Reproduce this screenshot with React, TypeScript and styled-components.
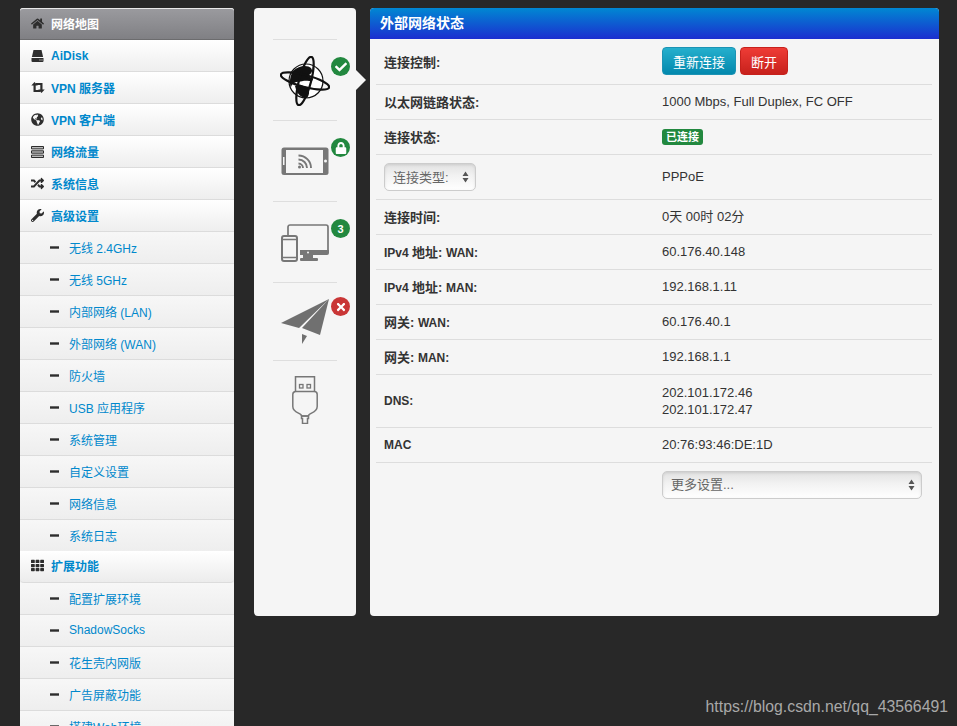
import React from 'react';
import styled, { createGlobalStyle } from 'styled-components';
import { FaHome, FaGlobeAmericas, FaRandom, FaWrench, FaTh, FaCheck, FaLock, FaTimes } from 'react-icons/fa';

const GlobalStyle = createGlobalStyle`
  html, body {
    margin: 0;
    height: 726px;
    overflow: hidden;
    background: #282828;
    font-family: "Liberation Sans", "Noto Sans CJK SC", sans-serif;
  }
  * { box-sizing: border-box; }
`;

const Page = styled.div`
  display: flex;
  align-items: flex-start;
  height: 726px;
  overflow: hidden;
  padding: 8px 0 0 20px;
  position: relative;
`;

const Sidebar = styled.nav`
  width: 214px;
  flex: none;
  margin-right: 20px;
  display: flex;
  flex-direction: column;
  background: #f2f2f2;
  border-radius: 3px 3px 0 0;
`;

const NavRow = styled.div<{ $active?: boolean; $sub?: boolean; $group?: boolean; $lift?: boolean }>`
  height: 32px;
  flex: none;
  display: flex;
  align-items: center;
  margin-top: ${(p) => (p.$group ? -1 : 0)}px;
  padding-left: ${(p) => (p.$sub ? 30 : 10)}px;
  padding-bottom: ${(p) => (p.$group ? 3 : p.$active || p.$lift ? 1 : 0)}px;
  gap: ${(p) => (p.$sub ? 10 : 6)}px;
  font-size: 12px;
  font-weight: ${(p) => (p.$sub ? 400 : 700)};
  color: ${(p) => (p.$active ? '#fff' : '#0088cc')};
  background: ${(p) =>
    p.$active
      ? 'linear-gradient(#9a9a9e, #808084)'
      : p.$group
        ? 'linear-gradient(#ffffff, #ececec)'
        : p.$sub
          ? 'linear-gradient(#f7f7f7, #eeeeee)'
          : 'linear-gradient(#ffffff, #eeeeee)'};
  border-bottom: 1px solid ${(p) => (p.$active ? '#6c6c6e' : '#dcdcdc')};
  border-radius: ${(p) => (p.$active ? '3px 3px 0 0' : p.$group ? '0 0 4px 4px' : '0')};
  border-top: ${(p) => (p.$active ? '1px solid #e8e8e8' : 'none')};
`;

const NavIcon = styled.span<{ $small?: boolean }>`
  width: ${(p) => (p.$small ? 9 : 15)}px;
  height: 14px;
  flex: none;
  display: flex;
  align-items: center;
  justify-content: center;
  color: #2d2d2d;
  font-size: 13px;
`;

const Rail = styled.div`
  width: 102px;
  height: 608px;
  flex: none;
  margin-right: 14px;
  background: #f5f5f5;
  border-radius: 4px;
  padding: 31px 19px 0;
  display: flex;
  flex-direction: column;
  position: relative;
`;

const RailCell = styled.div<{ $h: number }>`
  height: ${(p) => p.$h}px;
  flex: none;
  border-top: 1px solid #dedede;
  display: flex;
  justify-content: center;
  position: relative;
`;

const DeviceIcon = styled.svg<{ $top: number }>`
  margin-top: ${(p) => p.$top}px;
  display: block;
`;

const Badge = styled.span<{ $color: string; $top: number }>`
  position: absolute;
  right: -13px;
  top: ${(p) => p.$top}px;
  width: 19px;
  height: 19px;
  border-radius: 50%;
  background: ${(p) => p.$color};
  color: #fff;
  font-size: 11px;
  font-weight: 700;
  display: flex;
  align-items: center;
  justify-content: center;

  svg {
    width: 12px;
    height: 12px;
  }
`;

const Pointer = styled.span`
  position: absolute;
  left: 102px;
  top: 62px;
  width: 0;
  height: 0;
  border-top: 10px solid transparent;
  border-bottom: 10px solid transparent;
  border-left: 10px solid #f5f5f5;
`;

const Panel = styled.section`
  width: 569px;
  height: 608px;
  flex: none;
  background: #f5f5f5;
  border-radius: 4px;
  overflow: hidden;
`;

const PanelHead = styled.h2`
  margin: 0;
  height: 31px;
  padding: 0 0 3px 10px;
  display: flex;
  align-items: center;
  color: #fff;
  font-size: 14px;
  font-weight: 700;
  background: linear-gradient(#0088d2, #1c2ed0);
`;

const StatusTable = styled.div`
  margin: 0 7px 0 6px;
`;

const StatusRow = styled.div<{ $h: number; $last?: boolean }>`
  height: ${(p) => p.$h}px;
  display: grid;
  grid-template-columns: 278px 1fr;
  align-items: center;
  padding: 0 0 1px 8px;
  font-size: 13px;
  color: #333;
  border-bottom: ${(p) => (p.$last ? 'none' : '1px solid #dddddd')};
`;

const RowLabel = styled.div`
  font-weight: 700;
`;

const Latin = styled.span`
  font-size: 12px;
`;

const RowValue = styled.div`
  line-height: 17px;
`;

const ButtonGroup = styled.div`
  display: flex;
  gap: 4px;
`;

const Btn = styled.button<{ $from: string; $to: string; $line: string }>`
  height: 28px;
  padding: 0 10px;
  border: 1px solid ${(p) => p.$line};
  border-radius: 4px;
  font: 13px "Liberation Sans", "Noto Sans CJK SC", sans-serif;
  color: #fff;
  background: linear-gradient(${(p) => p.$from}, ${(p) => p.$to});
`;

const StatusTag = styled.span`
  display: inline-block;
  height: 16px;
  line-height: 16px;
  padding: 0 4px;
  border-radius: 3px;
  background: #22883f;
  color: #fff;
  font-size: 11px;
  font-weight: 700;
`;

const FakeSelect = styled.div<{ $w: number }>`
  width: ${(p) => p.$w}px;
  height: 28px;
  border: 1px solid #cccccc;
  border-radius: 5px;
  background: linear-gradient(#e2e2e2, #f2f2f2 45%, #ffffff);
  box-shadow: inset 0 1px 3px rgba(0, 0, 0, 0.1);
  color: #666;
  font-size: 13px;
  font-weight: 400;
  display: flex;
  align-items: center;
  justify-content: space-between;
  padding: 0 6px 0 8px;
`;

const Arrows = styled.svg`
  display: block;
  flex: none;
`;

const Watermark = styled.div`
  position: absolute;
  right: 9px;
  top: 697px;
  font-size: 15.8px;
  line-height: 20px;
  color: #a8a8a8;
`;

const SelectArrows = () => (
  <Arrows width="7" height="12" viewBox="0 0 7 12">
    <path d="M3.5 0.5 L6.5 5 H0.5 Z M0.5 7 H6.5 L3.5 11.5 Z" fill="#555" />
  </Arrows>
);

const DriveIcon = () => (
  <svg width="13" height="12" viewBox="0 0 13 12">
    <path d="M2.5 0h8l1.6 7H0.9z" fill="#2d2d2d" />
    <path d="M0.5 8h12v3a1 1 0 0 1-1 1h-10a1 1 0 0 1-1-1z" fill="#2d2d2d" />
    <path d="M8.5 9.5h1v1h-1zM10.5 9.5h1v1h-1z" fill="#eee" />
  </svg>
);

const RetweetIcon = () => (
  <svg width="14" height="11" viewBox="0 0 14 11">
    <path
      d="M3.5 0L6.8 3.6H4.7V8H9v2H2.5V3.6H0.3zM10.5 11L7.2 7.4h2.1V3H5V1h6.5v6.4h2.2z"
      fill="#2d2d2d"
    />
  </svg>
);

const TasksIcon = () => (
  <svg width="13" height="12" viewBox="0 0 13 12">
    <path d="M0.5 0.5h12v2.4h-12z M0.5 4.8h12v2.4h-12z M0.5 9.1h12v2.4h-12z" fill="#bbb" stroke="#2d2d2d" />
  </svg>
);

const MinusIcon = () => (
  <svg width="9" height="3" viewBox="0 0 9 3">
    <rect width="9" height="2.4" y="0.3" fill="#2d2d2d" />
  </svg>
);

const mainNav = [
  { label: 'AiDisk', icon: <DriveIcon /> },
  { label: 'VPN 服务器', icon: <RetweetIcon /> },
  { label: 'VPN 客户端', icon: <FaGlobeAmericas /> },
  { label: '网络流量', icon: <TasksIcon /> },
  { label: '系统信息', icon: <FaRandom /> },
  { label: '高级设置', icon: <FaWrench /> },
];

const advanced = [
  '无线 2.4GHz',
  '无线 5GHz',
  '内部网络 (LAN)',
  '外部网络 (WAN)',
  '防火墙',
  'USB 应用程序',
  '系统管理',
  '自定义设置',
  '网络信息',
  '系统日志',
];

const extras = ['配置扩展环境', 'ShadowSocks', '花生壳内网版', '广告屏蔽功能', '搭建Web环境'];

const SubItem: React.FC<{ label: string; lift?: boolean }> = ({ label, lift }) => (
  <NavRow $sub $lift={lift}>
    <NavIcon $small>
      <MinusIcon />
    </NavIcon>
    {label}
  </NavRow>
);

const App: React.FC = () => (
  <Page>
    <GlobalStyle />
    <Sidebar>
      <NavRow $active>
        <NavIcon>
          <FaHome />
        </NavIcon>
        网络地图
      </NavRow>
      {mainNav.map((item) => (
        <NavRow key={item.label}>
          <NavIcon>{item.icon}</NavIcon>
          {item.label}
        </NavRow>
      ))}
      {advanced.map((label) => (
        <SubItem key={label} label={label} />
      ))}
      <NavRow $group>
        <NavIcon>
          <FaTh />
        </NavIcon>
        扩展功能
      </NavRow>
      {extras.map((label) => (
        <SubItem key={label} label={label} lift />
      ))}
    </Sidebar>

    <Rail>
      <Pointer />
      <RailCell $h={81}>
        <DeviceIcon $top={16} width="50" height="50" viewBox="0 0 50 50">
          <circle cx="26" cy="25" r="17" fill="#fff" stroke="#111" strokeWidth="1.2" />
          <path d="M13 15c6-6 15-6 18-3 3 4-1 6-3 8 2 2 5 1 5 4-3 2-7 0-10 1-3 1-6 0-9 2-2 1-3 3-3 5-2-6-1-12 2-17zM15 30c5-2 10 0 13 2 2 3 1 8-1 10-5 0-10-3-12-12z" fill="#111" />
          <ellipse cx="25" cy="25" rx="25" ry="6" transform="rotate(15 25 25)" fill="none" stroke="#111" strokeWidth="2.2" />
          <ellipse cx="25" cy="25" rx="25" ry="6" transform="rotate(-75 25 25)" fill="none" stroke="#111" strokeWidth="2.2" />
        </DeviceIcon>
        <Badge $color="#22883f" $top={17}>
          <FaCheck />
        </Badge>
      </RailCell>
      <RailCell $h={81}>
        <DeviceIcon $top={26} width="48" height="29" viewBox="0 0 48 29">
          <rect x="0.5" y="0.5" width="47" height="27.5" rx="2.5" fill="#777" />
          <rect x="5" y="3" width="37" height="23" fill="#f5f5f5" />
          <rect x="2" y="10" width="1.5" height="8" fill="#f5f5f5" />
          <circle cx="44.5" cy="14" r="1.5" fill="#f5f5f5" />
          <path d="M17.5 8.5a12.5 12.5 0 0 1 12.5 12.5M17.5 12.5a8.5 8.5 0 0 1 8.5 8.5M17.5 16.5a4.5 4.5 0 0 1 4.5 4.5" fill="none" stroke="#777" strokeWidth="1.9" />
          <circle cx="18.5" cy="20" r="1.5" fill="#777" />
        </DeviceIcon>
        <Badge $color="#22883f" $top={17}>
          <FaLock />
        </Badge>
      </RailCell>
      <RailCell $h={81}>
        <DeviceIcon $top={22} width="48" height="38" viewBox="0 0 48 38">
          <path d="M7 11V3a2 2 0 0 1 2-2h36a2 2 0 0 1 2 2v24" fill="none" stroke="#777" strokeWidth="1.7" />
          <path d="M19 26h29v3a2 2 0 0 1-2 2H19z" fill="#777" />
          <circle cx="27" cy="28.5" r="1" fill="#f5f5f5" />
          <rect x="22" y="31" width="10" height="3" fill="#777" />
          <rect x="19" y="34" width="18" height="3" rx="1" fill="#777" />
          <rect x="1" y="12" width="15" height="25" rx="2" fill="#f5f5f5" stroke="#777" strokeWidth="2" />
          <path d="M1 15.5h15M1 33.5h15" stroke="#777" strokeWidth="1.6" />
        </DeviceIcon>
        <Badge $color="#22883f" $top={17}>3</Badge>
      </RailCell>
      <RailCell $h={78}>
        <DeviceIcon $top={16} width="48" height="46" viewBox="0 0 48 46">
          <path d="M48 0 L0 24 L18 29 Z M48 0 L21 29 L39 36 Z M21 35 L26 37 L21 45 Z" fill="#707070" />
        </DeviceIcon>
        <Badge $color="#c93636" $top={14}>
          <FaTimes />
        </Badge>
      </RailCell>
      <RailCell $h={100}>
        <DeviceIcon $top={15} width="26" height="48" viewBox="0 0 26 48">
          <path d="M3.5 15.5V0.8h19v14.7" fill="none" stroke="#777" strokeWidth="1.5" />
          <rect x="7.5" y="8.5" width="3.5" height="3.5" fill="none" stroke="#777" strokeWidth="1.3" />
          <rect x="15" y="8.5" width="3.5" height="3.5" fill="none" stroke="#777" strokeWidth="1.3" />
          <path d="M0.8 18.5a3 3 0 0 1 3-3h18.4a3 3 0 0 1 3 3v12c0 5-5 6-8 8l-1 1.5h-6.4l-1-1.5c-3-2-8-3-8-8z" fill="none" stroke="#777" strokeWidth="1.5" />
          <path d="M9.5 40h7v2.5h-1v5h-5v-5h-1z" fill="none" stroke="#777" strokeWidth="1.5" />
        </DeviceIcon>
      </RailCell>
    </Rail>

    <Panel>
      <PanelHead>外部网络状态</PanelHead>
      <StatusTable>
        <StatusRow $h={46}>
          <RowLabel>连接控制:</RowLabel>
          <ButtonGroup>
            <Btn $from="#25afcd" $to="#0388ad" $line="#1c93b4">重新连接</Btn>
            <Btn $from="#ee3c36" $to="#c7211c" $line="#c7211c">断开</Btn>
          </ButtonGroup>
        </StatusRow>
        <StatusRow $h={35}>
          <RowLabel>以太网链路状态:</RowLabel>
          <RowValue>1000 Mbps, Full Duplex, FC OFF</RowValue>
        </StatusRow>
        <StatusRow $h={35}>
          <RowLabel>连接状态:</RowLabel>
          <RowValue>
            <StatusTag>已连接</StatusTag>
          </RowValue>
        </StatusRow>
        <StatusRow $h={45}>
          <RowLabel>
            <FakeSelect $w={92}>
              连接类型:
              <SelectArrows />
            </FakeSelect>
          </RowLabel>
          <RowValue>PPPoE</RowValue>
        </StatusRow>
        <StatusRow $h={35}>
          <RowLabel>连接时间:</RowLabel>
          <RowValue>0天 00时 02分</RowValue>
        </StatusRow>
        <StatusRow $h={35}>
          <RowLabel><Latin>IPv4 </Latin>地址: <Latin>WAN:</Latin></RowLabel>
          <RowValue>60.176.40.148</RowValue>
        </StatusRow>
        <StatusRow $h={35}>
          <RowLabel><Latin>IPv4 </Latin>地址: <Latin>MAN:</Latin></RowLabel>
          <RowValue>192.168.1.11</RowValue>
        </StatusRow>
        <StatusRow $h={35}>
          <RowLabel>网关: <Latin>WAN:</Latin></RowLabel>
          <RowValue>60.176.40.1</RowValue>
        </StatusRow>
        <StatusRow $h={35}>
          <RowLabel>网关: <Latin>MAN:</Latin></RowLabel>
          <RowValue>192.168.1.1</RowValue>
        </StatusRow>
        <StatusRow $h={53}>
          <RowLabel><Latin>DNS:</Latin></RowLabel>
          <RowValue>
            202.101.172.46
            <br />
            202.101.172.47
          </RowValue>
        </StatusRow>
        <StatusRow $h={35}>
          <RowLabel><Latin>MAC</Latin></RowLabel>
          <RowValue>20:76:93:46:DE:1D</RowValue>
        </StatusRow>
        <StatusRow $h={44} $last>
          <div />
          <RowValue>
            <FakeSelect $w={260}>
              更多设置...
              <SelectArrows />
            </FakeSelect>
          </RowValue>
        </StatusRow>
      </StatusTable>
    </Panel>
    <Watermark>https://blog.csdn.net/qq_43566491</Watermark>
  </Page>
);

export default App;
